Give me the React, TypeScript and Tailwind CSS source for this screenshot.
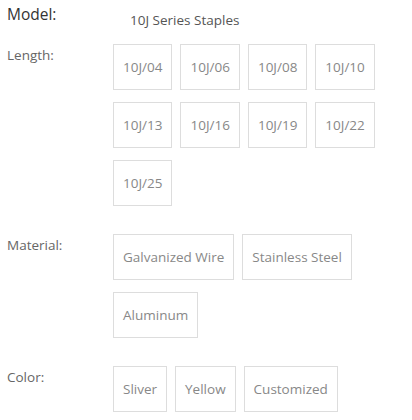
import React from 'react'

type Option = {
  label: string
  values: string[]
}

const options: Option[] = [
  {
    label: 'Length:',
    values: ['10J/04', '10J/06', '10J/08', '10J/10', '10J/13', '10J/16', '10J/19', '10J/22', '10J/25'],
  },
  { label: 'Material:', values: ['Galvanized Wire', 'Stainless Steel', 'Aluminum'] },
  { label: 'Color:', values: ['Sliver', 'Yellow', 'Customized'] },
]

export default function App() {
  return (
    <div
      className="min-h-screen bg-white pl-[7px] pt-[3px]"
      style={{ fontFamily: '"Open Sans", "Liberation Sans", sans-serif' }}
    >
      {/* model */}
      <div className="flex h-[41px] items-start">
        <span className="w-[106px] shrink-0 text-[15.5px] leading-normal text-[#333]">Model:</span>
        <span className="ml-[17px] pt-[7px] text-[13.5px] leading-normal text-[#555]">
          10J Series Staples
        </span>
      </div>

      {/* options */}
      {options.map((opt) => (
        <div key={opt.label} className="mb-7 flex items-start">
          <span className="w-[106px] shrink-0 pt-[1px] text-[13.5px] leading-normal text-[#666]">
            {opt.label}
          </span>
          <div className="flex flex-1 flex-wrap gap-x-2 gap-y-3">
            {opt.values.map((v) => (
              <button
                key={v}
                className="h-[46px] border border-[#ddd] bg-white px-[9px] text-[13.5px] leading-[20px] text-[#888]"
              >
                {v}
              </button>
            ))}
          </div>
        </div>
      ))}
    </div>
  )
}
